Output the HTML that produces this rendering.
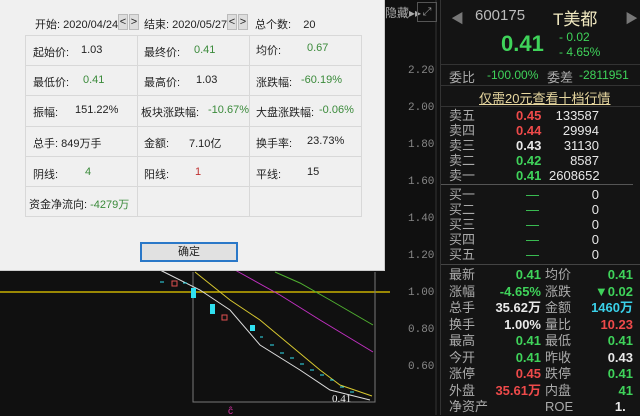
<!DOCTYPE html>
<html><head><meta charset="utf-8"><style>
*{margin:0;padding:0;box-sizing:border-box}
body{width:640px;height:415px;background:#101010;position:relative;overflow:hidden;font-family:"Liberation Sans","Noto Sans CJK SC",sans-serif}
.a{position:absolute;white-space:nowrap}
.dlg{position:absolute;left:0;top:0;width:385px;height:271px;background:#f0f0f0;border-right:1px solid #ccc;border-bottom:1px solid #ccc;font-size:11px;color:#222}
.cell{position:absolute;border:1px solid #d8d8d8;background:#f0f0f0}
.g{color:#3a8a3a}.r{color:#c03030}
.rp{position:absolute;left:440px;top:0;width:200px;height:415px;background:#141414;font-size:13px;color:#ccc;border-left:1px solid #333}
.lab{color:#aaa}
.gn{color:#3fd35a}.rd{color:#ee4a4a}.wh{color:#e8e8e8}.cy{color:#3ad0e8}
.ax{position:absolute;left:408px;color:#888;font-size:11px;font-family:"Liberation Mono",monospace}
</style></head><body>
<svg class="a" style="left:0;top:0" width="440" height="415">
<line x1="436" y1="0" x2="436" y2="415" stroke="#333"/>
<line x1="0" y1="292" x2="390" y2="292" stroke="#c8b000" stroke-width="1.5"/>
<polyline points="193,272 193,402 375,402 375,272" fill="none" stroke="#777"/>
<polyline points="160,270 200,290 230,310 260,345 300,370 330,390 370,400" fill="none" stroke="#ddd"/>
<polyline points="195,272 230,300 260,320 290,345 320,370 340,385 372,396" fill="none" stroke="#d8c830"/>
<polyline points="235,270 280,295 320,320 373,352" fill="none" stroke="#c030c0"/>
<polyline points="275,272 300,283 330,300 373,325" fill="none" stroke="#50b030"/>
<rect x="191" y="288" width="5" height="10" fill="#30e0f0"/>
<rect x="210" y="304" width="5" height="10" fill="#30e0f0"/>
<rect x="172" y="281" width="5" height="5" fill="none" stroke="#e05050"/>
<rect x="222" y="315" width="5" height="5" fill="none" stroke="#e05050"/>
<rect x="250" y="325" width="5" height="6" fill="#30e0f0"/>
<g stroke="#30e0f0"><line x1="260" y1="337" x2="263" y2="337"/><line x1="270" y1="345" x2="274" y2="345"/><line x1="280" y1="353" x2="284" y2="353"/><line x1="290" y1="358" x2="294" y2="358"/><line x1="300" y1="364" x2="304" y2="364"/><line x1="310" y1="370" x2="314" y2="370"/><line x1="320" y1="375" x2="324" y2="375"/><line x1="330" y1="380" x2="334" y2="380"/><line x1="340" y1="387" x2="344" y2="387"/><line x1="350" y1="392" x2="354" y2="392"/><line x1="160" y1="282" x2="164" y2="282"/><line x1="183" y1="283" x2="187" y2="283"/></g>
<text x="332" y="402" fill="#eee" font-size="11" font-family="Liberation Serif">0.41</text>
<text x="228" y="414" fill="#d030a0" font-size="10">ĉ</text>
</svg>
<div class="ax" style="top:65px">2.20</div>
<div class="ax" style="top:102px">2.00</div>
<div class="ax" style="top:139px">1.80</div>
<div class="ax" style="top:176px">1.60</div>
<div class="ax" style="top:213px">1.40</div>
<div class="ax" style="top:250px">1.20</div>
<div class="ax" style="top:287px">1.00</div>
<div class="ax" style="top:324px">0.80</div>
<div class="ax" style="top:361px">0.60</div>
<div class="a" style="left:385px;top:4px;width:30px;height:18px;color:#aaa;font-size:12px">隐藏▸▸</div>
<div class="a" style="left:417px;top:2px;width:20px;height:20px;border:1px solid #555;color:#999;font-size:11px;text-align:center;line-height:18px">⤢</div>

<div class="dlg">
<div class="a" style="left:35px;top:16px">开始: 2020/04/24</div>
<div class="a" style="left:118px;top:14px;width:10px;height:16px;background:#ddd;border:1px solid #bbb;text-align:center;line-height:14px">&lt;</div>
<div class="a" style="left:129px;top:14px;width:10px;height:16px;background:#ddd;border:1px solid #bbb;text-align:center;line-height:14px">&gt;</div>
<div class="a" style="left:144px;top:16px">结束: 2020/05/27</div>
<div class="a" style="left:227px;top:14px;width:10px;height:16px;background:#ddd;border:1px solid #bbb;text-align:center;line-height:14px">&lt;</div>
<div class="a" style="left:238px;top:14px;width:10px;height:16px;background:#ddd;border:1px solid #bbb;text-align:center;line-height:14px">&gt;</div>
<div class="a" style="left:255px;top:16px">总个数:&nbsp;&nbsp;&nbsp;&nbsp;20</div>

<div class="cell" style="left:25px;top:35px;width:113px;height:31px"></div><div class="cell" style="left:137px;top:35px;width:113px;height:31px"></div><div class="cell" style="left:249px;top:35px;width:113px;height:31px"></div>
<div class="cell" style="left:25px;top:65px;width:113px;height:31px"></div><div class="cell" style="left:137px;top:65px;width:113px;height:31px"></div><div class="cell" style="left:249px;top:65px;width:113px;height:31px"></div>
<div class="cell" style="left:25px;top:95px;width:113px;height:32px"></div><div class="cell" style="left:137px;top:95px;width:113px;height:32px"></div><div class="cell" style="left:249px;top:95px;width:113px;height:32px"></div>
<div class="cell" style="left:25px;top:126px;width:113px;height:31px"></div><div class="cell" style="left:137px;top:126px;width:113px;height:31px"></div><div class="cell" style="left:249px;top:126px;width:113px;height:31px"></div>
<div class="cell" style="left:25px;top:156px;width:113px;height:31px"></div><div class="cell" style="left:137px;top:156px;width:113px;height:31px"></div><div class="cell" style="left:249px;top:156px;width:113px;height:31px"></div>
<div class="cell" style="left:25px;top:186px;width:113px;height:31px"></div><div class="cell" style="left:137px;top:186px;width:113px;height:31px"></div><div class="cell" style="left:249px;top:186px;width:113px;height:31px"></div>

<div class="a" style="left:33px;top:44px">起始价:</div><div class="a" style="left:81px;top:44px">1.03</div>
<div class="a" style="left:144px;top:44px">最终价:</div><div class="a g" style="left:194px;top:44px">0.41</div>
<div class="a" style="left:256px;top:42px">均价:</div><div class="a g" style="left:307px;top:42px">0.67</div>
<div class="a" style="left:33px;top:74px">最低价:</div><div class="a g" style="left:83px;top:74px">0.41</div>
<div class="a" style="left:144px;top:74px">最高价:</div><div class="a" style="left:196px;top:74px">1.03</div>
<div class="a" style="left:256px;top:74px">涨跌幅:</div><div class="a g" style="left:301px;top:74px">-60.19%</div>
<div class="a" style="left:33px;top:104px">振幅:</div><div class="a" style="left:75px;top:104px">151.22%</div>
<div class="a" style="left:141px;top:104px">板块涨跌幅:</div><div class="a g" style="left:208px;top:104px">-10.67%</div>
<div class="a" style="left:256px;top:104px">大盘涨跌幅:</div><div class="a g" style="left:319px;top:104px">-0.06%</div>
<div class="a" style="left:33px;top:135px">总手: 849万手</div>
<div class="a" style="left:144px;top:135px">金额:</div><div class="a" style="left:189px;top:135px">7.10亿</div>
<div class="a" style="left:256px;top:135px">换手率:</div><div class="a" style="left:307px;top:135px">23.73%</div>
<div class="a" style="left:33px;top:166px">阴线:</div><div class="a g" style="left:85px;top:166px">4</div>
<div class="a" style="left:144px;top:166px">阳线:</div><div class="a r" style="left:195px;top:166px">1</div>
<div class="a" style="left:256px;top:166px">平线:</div><div class="a" style="left:307px;top:166px">15</div>
<div class="a" style="left:29px;top:196px">资金净流向: <span class="g">-4279万</span></div>

<div class="a" style="left:140px;top:242px;width:98px;height:20px;background:#e1e1e1;border:2px solid #2a78c8;text-align:center;line-height:16px">确定</div>
</div>

<div class="rp">
<div class="a" style="left:10px;top:8px;color:#777">◀</div>
<div class="a" style="left:34px;top:7px;font-size:15px;color:#bbb">600175</div>
<div class="a" style="left:112px;top:5px;font-size:17px;color:#f0e8c0">T美都</div>
<div class="a" style="left:184px;top:8px;color:#777">▶</div>
<div class="a gn" style="left:60px;top:31px;font-size:22px;font-weight:bold">0.41</div>
<div class="a gn" style="left:118px;top:30px;font-size:12px">- 0.02</div>
<div class="a gn" style="left:118px;top:45px;font-size:12px">- 4.65%</div>
<div class="a" style="left:0;top:64px;width:200px;height:22px;border-top:1px solid #333;border-bottom:1px solid #333"></div>
<div class="a lab" style="left:8px;top:67px">委比</div>
<div class="a gn" style="left:46px;top:68px;font-size:12px">-100.00%</div>
<div class="a lab" style="left:106px;top:67px">委差</div>
<div class="a gn" style="left:138px;top:68px;font-size:12px">-2811951</div>
<div class="a" style="left:38px;top:88px;color:#e8d8a0;font-size:13px;text-decoration:underline">仅需20元查看十档行情</div>
<div class="a" style="left:0;top:106px;width:200px;border-top:1px solid #333"></div>
<div class="a" style="left:8px;top:108px;line-height:15px;color:#aaa;font-size:13px">卖五<br>卖四<br>卖三<br>卖二<br>卖一</div>
<div class="a" style="left:75px;top:108px;line-height:15px;font-size:13px;font-weight:bold;text-align:right"><span class="rd">0.45</span><br><span class="rd">0.44</span><br><span class="wh">0.43</span><br><span class="gn">0.42</span><br><span class="gn">0.41</span></div>
<div class="a wh" style="left:108px;top:108px;width:50px;line-height:15px;font-size:13px;text-align:right">133587<br>29994<br>31130<br>8587<br>2608652</div>
<div class="a" style="left:0;top:184px;width:192px;border-top:1px solid #555"></div>
<div class="a" style="left:8px;top:187px;line-height:15px;color:#aaa;font-size:13px">买一<br>买二<br>买三<br>买四<br>买五</div>
<div class="a gn" style="left:85px;top:187px;line-height:15px;font-size:13px">—<br>—<br>—<br>—<br>—</div>
<div class="a wh" style="left:140px;top:187px;width:18px;line-height:15px;font-size:13px;text-align:right">0<br>0<br>0<br>0<br>0</div>
<div class="a" style="left:0;top:264px;width:200px;border-top:1px solid #444"></div>
<div class="a" style="left:8px;top:267px;line-height:16.5px;color:#aaa;font-size:13px">最新<br>涨幅<br>总手<br>换手<br>最高<br>今开<br>涨停<br>外盘<br>净资产</div>
<div class="a" style="left:30px;top:267px;width:70px;line-height:16.5px;font-size:13px;font-weight:bold;text-align:right"><span class="gn">0.41</span><br><span class="gn">-4.65%</span><br><span class="wh">35.62万</span><br><span class="wh">1.00%</span><br><span class="gn">0.41</span><br><span class="gn">0.41</span><br><span class="rd">0.45</span><br><span class="rd">35.61万</span><br><span class="wh">&nbsp;</span></div>
<div class="a" style="left:104px;top:267px;line-height:16.5px;color:#aaa;font-size:13px">均价<br>涨跌<br>金额<br>量比<br>最低<br>昨收<br>跌停<br>内盘<br>ROE</div>
<div class="a" style="left:130px;top:267px;width:62px;line-height:16.5px;font-size:13px;font-weight:bold;text-align:right"><span class="gn">0.41</span><br><span class="gn">▼0.02</span><br><span class="cy">1460万</span><br><span class="rd">10.23</span><br><span class="gn">0.41</span><br><span class="wh">0.43</span><br><span class="gn">0.41</span><br><span class="gn">41</span><br><span class="wh">1.&nbsp;&nbsp;</span></div>
</div>
</body></html>
